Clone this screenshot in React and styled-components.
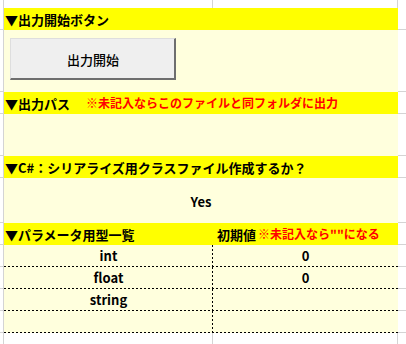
import React from "react";
import styled, { createGlobalStyle } from "styled-components";

const GRID = "#d4d4d4";
const YELLOW = "#ffff00";
const PALE = "#ffffdd";
const FONT = `"Noto Sans CJK JP", "Noto Sans", sans-serif`;

const Global = createGlobalStyle`
  *, *::before, *::after { box-sizing: border-box; }
  html, body { margin: 0; padding: 0; background: #fff; }
  body { font-family: ${FONT}; color: #000; }
`;

const Sheet = styled.div`
  width: 406px;
  display: flex;
  flex-direction: column;
`;

const EdgeStrip = styled.div`
  display: grid;
  grid-template-columns: 4px 209px 185px 1fr;
  height: ${(p) => p.$h}px;
`;

const EdgeCell = styled.div`
  border-right: ${(p) => (p.$last ? "none" : `1px solid ${GRID}`)};
`;

const Row = styled.div`
  display: grid;
  grid-template-columns: 4px 394px 1fr;
  height: ${(p) => p.$h}px;
`;

const LeftGutter = styled.div`
  border-right: 1px solid ${GRID};
  border-bottom: 1px solid ${GRID};
`;

const RightGutter = styled.div`
  border-bottom: 1px solid ${GRID};
`;

const HeaderBand = styled.div`
  background: ${YELLOW};
  display: ${(p) => (p.$split ? "grid" : "flex")};
  grid-template-columns: 209px 1fr;
  align-items: center;
  padding-left: 1px;
  font-size: 13px;
  font-weight: 700;
  white-space: nowrap;
  line-height: 1;
`;

const HeadCell = styled.div`
  display: flex;
  align-items: center;
  padding-left: ${(p) => p.$pad || 0}px;
`;

const Note = styled.span`
  color: #ff0000;
  font-size: 12px;
  font-weight: 700;
  margin-left: ${(p) => p.$gap || 0}px;
`;

const Body = styled.div`
  background: ${PALE};
  display: flex;
  align-items: ${(p) => (p.$center ? "center" : "flex-start")};
  justify-content: ${(p) => (p.$center ? "center" : "flex-start")};
  padding: ${(p) => p.$pad || "0"};
`;

const SheetButton = styled.div`
  width: 166px;
  height: 42px;
  background: #efefef;
  border-top: 1px solid #dedede;
  border-left: 1px solid #dedede;
  border-right: 2px solid #6e6e6e;
  border-bottom: 2px solid #6e6e6e;
  display: flex;
  align-items: center;
  justify-content: center;
  font-size: 13px;
  font-weight: 500;
  padding-left: 1px;
  padding-top: 2px;
`;

const BigValue = styled.div`
  font-size: 13px;
  font-weight: 700;
  padding-top: 2px;
`;

const DataBand = styled.div`
  display: grid;
  grid-template-columns: 209px 1fr;
  background-color: ${PALE};
  background-image: linear-gradient(to right, #000 50%, transparent 50%);
  background-size: 4px 1px;
  background-repeat: repeat-x;
  background-position: 0 100%;
`;

const DataCell = styled.div`
  display: flex;
  align-items: center;
  justify-content: center;
  font-size: 13px;
  font-weight: 700;
  padding-bottom: 1px;
  ${(p) =>
    p.$divider &&
    `
    background-image: linear-gradient(to bottom, #000 50%, transparent 50%);
    background-size: 1px 4px;
    background-repeat: repeat-y;
    background-position: 100% 0;
  `}
`;

const Line = ({ h, children }) => (
  <Row $h={h}>
    <LeftGutter />
    {children}
    <RightGutter />
  </Row>
);

const rows = [
  { type: "int", init: "0" },
  { type: "float", init: "0" },
  { type: "string", init: "" },
  { type: "", init: "" },
];

export default function App() {
  return (
    <>
      <Global />
      <Sheet>
        <EdgeStrip $h={8}>
          <EdgeCell />
          <EdgeCell />
          <EdgeCell />
          <EdgeCell $last />
        </EdgeStrip>

        <Line h={22}>
          <HeaderBand>▼出力開始ボタン</HeaderBand>
        </Line>
        <Line h={62}>
          <Body $pad="8px 0 0 6px">
            <SheetButton>出力開始</SheetButton>
          </Body>
        </Line>

        <Line h={22}>
          <HeaderBand>
            ▼出力パス
            <Note $gap={16}>※未記入ならこのファイルと同フォルダに出力</Note>
          </HeaderBand>
        </Line>
        <Line h={42}>
          <Body />
        </Line>

        <Line h={22}>
          <HeaderBand>▼C#：シリアライズ用クラスファイル作成するか？</HeaderBand>
        </Line>
        <Line h={45}>
          <Body $center>
            <BigValue>Yes</BigValue>
          </Body>
        </Line>

        <Line h={22}>
          <HeaderBand $split>
            <HeadCell>▼パラメータ用型一覧</HeadCell>
            <HeadCell $pad={3}>
              初期値
              <Note $gap={2}>※未記入なら""になる</Note>
            </HeadCell>
          </HeaderBand>
        </Line>
        {rows.map((r, i) => (
          <Line h={22} key={i}>
            <DataBand>
              <DataCell $divider>{r.type}</DataCell>
              <DataCell>{r.init}</DataCell>
            </DataBand>
          </Line>
        ))}

        <EdgeStrip $h={11}>
          <EdgeCell />
          <EdgeCell />
          <EdgeCell />
          <EdgeCell $last />
        </EdgeStrip>
      </Sheet>
    </>
  );
}
